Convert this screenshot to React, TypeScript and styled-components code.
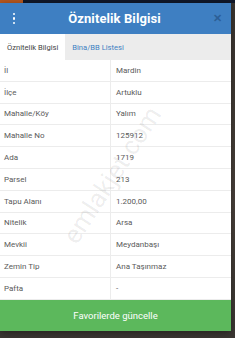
import styled, { createGlobalStyle } from 'styled-components'

const GlobalStyle = createGlobalStyle`
  html, body {
    margin: 0;
    padding: 0;
    background: #2a2622;
  }
  body {
    font-family: Roboto, 'Noto Sans', 'Liberation Sans', sans-serif;
  }
`

const Backdrop = styled.div`
  width: 235px;
  height: 338px;
  box-sizing: border-box;
  padding: 3px 4px 7px 0;
  background:
    linear-gradient(90deg, #b8581f 0 23px, #10182a 23px 100%) top / 100% 3px no-repeat,
    linear-gradient(180deg, #3a3530 0%, #4a423c 60%, #3b3733 100%);
  overflow: hidden;
`

const Modal = styled.div`
  position: relative;
  display: flex;
  flex-direction: column;
  height: 100%;
  background: #fff;
  overflow: hidden;
  box-shadow: 0 2px 8px rgba(0, 0, 0, 0.4);
`

const Header = styled.div`
  display: flex;
  align-items: center;
  height: 31px;
  flex-shrink: 0;
  padding: 0 9px 0 11px;
  background: #3e7fc2;
  color: #fff;
`

const Kebab = styled.div`
  display: flex;
  flex-direction: column;
  gap: 2px;
  width: 6px;
  align-items: center;

  span {
    width: 2.5px;
    height: 2.5px;
    border-radius: 50%;
    background: #fff;
  }
`

const Title = styled.div`
  flex: 1;
  text-align: center;
  font-size: 13px;
  font-weight: 700;
  letter-spacing: 0.1px;
`

const Close = styled.div`
  width: 10px;
  text-align: center;
  font-size: 11px;
  font-weight: 700;
  color: #2c5f97;
  line-height: 1;
`

const Tabs = styled.div`
  display: flex;
  height: 26px;
  flex-shrink: 0;
  background: #ececec;
`

const Tab = styled.div<{ $active?: boolean }>`
  display: flex;
  align-items: center;
  padding: 0 7px;
  font-size: 7.6px;
  background: ${(p) => (p.$active ? '#fff' : 'transparent')};
  color: ${(p) => (p.$active ? '#444' : '#3e7fc2')};
`

const Table = styled.div`
  display: flex;
  flex-direction: column;
  flex: 1;
`

const Row = styled.div`
  display: grid;
  grid-template-columns: 110px 1fr;
  height: 21.8px;
  box-sizing: border-box;
  border-bottom: 1px solid #ececec;
  font-size: 8px;
  color: #5a5a5a;
`

const Cell = styled.div<{ $value?: boolean }>`
  display: flex;
  align-items: center;
  padding-left: ${(p) => (p.$value ? '5px' : '4px')};
  border-left: ${(p) => (p.$value ? '1px solid #ececec' : 'none')};
`

const Watermark = styled.div`
  position: absolute;
  left: 112px;
  top: 172px;
  transform: translate(-50%, -50%) rotate(-57deg);
  font-size: 26px;
  color: rgba(0, 0, 0, 0.08);
  pointer-events: none;
  white-space: nowrap;
`

const SaveButton = styled.div`
  display: flex;
  align-items: center;
  justify-content: center;
  height: 31px;
  flex-shrink: 0;
  background: #5cb85c;
  color: #fff;
  font-size: 9.5px;
`

const rows: [string, string][] = [
  ['İl', 'Mardin'],
  ['İlçe', 'Artuklu'],
  ['Mahalle/Köy', 'Yalım'],
  ['Mahalle No', '125912'],
  ['Ada', '1719'],
  ['Parsel', '213'],
  ['Tapu Alanı', '1.200,00'],
  ['Nitelik', 'Arsa'],
  ['Mevkii', 'Meydanbaşı'],
  ['Zemin Tip', 'Ana Taşınmaz'],
  ['Pafta', '-']
]

export default function App() {
  return (
    <>
      <GlobalStyle />
      <Backdrop>
        <Modal>
          <Header>
            <Kebab>
              <span />
              <span />
              <span />
            </Kebab>
            <Title>Öznitelik Bilgisi</Title>
            <Close>✕</Close>
          </Header>
          <Tabs>
            <Tab $active>Öznitelik Bilgisi</Tab>
            <Tab>Bina/BB Listesi</Tab>
          </Tabs>
          <Table>
            {rows.map(([label, value]) => (
              <Row key={label}>
                <Cell>{label}</Cell>
                <Cell $value>{value}</Cell>
              </Row>
            ))}
          </Table>
          <SaveButton>Favorilerde güncelle</SaveButton>
          <Watermark>emlakjet.com</Watermark>
        </Modal>
      </Backdrop>
    </>
  )
}
